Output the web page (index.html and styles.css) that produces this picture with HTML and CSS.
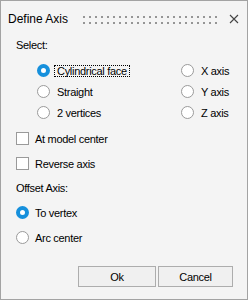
FILE: index.html
```html
<!DOCTYPE html>
<html lang="en">
<head>
  <meta charset="UTF-8" />
  <title>Define Axis</title>
  <link rel="stylesheet" href="styles.css">
</head>
<body>
  <div class="dialog">
    <div class="titlebar">
      <span class="title">Define Axis</span>
      <span class="grip"></span>
      <span class="close">
        <svg width="10" height="10" viewBox="0 0 10 10"><path d="M1 1 L9 9 M9 1 L1 9" stroke="#444" stroke-width="1.1" fill="none"/></svg>
      </span>
    </div>

    <div class="content">
      <div class="caption">Select:</div>
      <div class="choices">
        <div class="opt"><span class="radio on"></span><span class="txt focus">Cylindrical face</span></div>
        <div class="opt"><span class="radio"></span><span class="txt">X axis</span></div>
        <div class="opt"><span class="radio"></span><span class="txt">Straight</span></div>
        <div class="opt"><span class="radio"></span><span class="txt">Y axis</span></div>
        <div class="opt"><span class="radio"></span><span class="txt">2 vertices</span></div>
        <div class="opt"><span class="radio"></span><span class="txt">Z axis</span></div>
      </div>

      <div class="row first"><span class="check"></span><span class="lbl">At model center</span></div>
      <div class="row"><span class="check"></span><span class="lbl">Reverse axis</span></div>

      <div class="caption offset">Offset Axis:</div>
      <div class="row"><span class="radio on"></span><span class="lbl">To vertex</span></div>
      <div class="row"><span class="radio"></span><span class="lbl">Arc center</span></div>

      <div class="buttons">
        <button class="btn ok">Ok</button>
        <button class="btn">Cancel</button>
      </div>
    </div>
  </div>
</body>
</html>
```

FILE: styles.css
```css
body {
  margin: 0;
  background: #fff;
  font-family: 'Liberation Sans', Arial, sans-serif;
  color: #000;
}
.dialog {
  box-sizing: border-box;
  width: 248px;
  height: 300px;
  border: 1px solid #a3a3a3;
  background: #f4f4f4;
}
.titlebar {
  display: flex;
  align-items: center;
  height: 36px;
  padding-left: 7px;
}
.title {
  width: 75px;
  font-size: 12px;
}
.grip {
  width: 134px;
  height: 8px;
  margin-top: 2px;
  background: conic-gradient(from 0deg at 2px 2px, transparent 75%, #959595 0) 0 0 / 6px 6px;
}
.close {
  display: flex;
  align-items: center;
  justify-content: center;
  width: 22px;
  height: 20px;
  margin-left: 6px;
}
.content {
  padding-left: 15px;
  font-size: 11px;
  letter-spacing: -0.3px;
}
.caption {
  height: 16px;
  line-height: 16px;
}
.choices {
  display: grid;
  grid-template-columns: 144px auto;
  margin: 7px 0 0 21px;
}
.opt {
  display: flex;
  align-items: center;
  height: 21px;
}
.radio {
  box-sizing: border-box;
  width: 13px;
  height: 13px;
  border-radius: 50%;
  border: 1px solid #9a9a9a;
  background: #fff;
  flex: none;
}
.radio.on {
  border: 4px solid #1690dc;
}
.opt .txt {
  margin-left: 4px;
  padding: 0 2px;
  line-height: 10px;
  border: 1px dotted transparent;
}
.opt .txt.focus {
  border-color: #000;
}
.row {
  display: flex;
  align-items: center;
  height: 25px;
}
.row.first {
  margin-top: 3px;
}
.check {
  box-sizing: border-box;
  width: 13px;
  height: 13px;
  border: 1px solid #9a9a9a;
  background: #fff;
  flex: none;
}
.row .lbl {
  margin-left: 6px;
}
.offset {
  height: 24px;
  line-height: 24px;
}
.buttons {
  display: flex;
  justify-content: flex-end;
  gap: 2px;
  margin-top: 16px;
  padding-right: 14px;
}
.btn {
  box-sizing: border-box;
  width: 75px;
  height: 21px;
  padding: 0;
  border: 1px solid #adadad;
  background: #f0f0f0;
  font-family: inherit;
  font-size: 11px;
  letter-spacing: -0.3px;
  color: #000;
}
.btn.ok {
  width: 78px;
}
```
